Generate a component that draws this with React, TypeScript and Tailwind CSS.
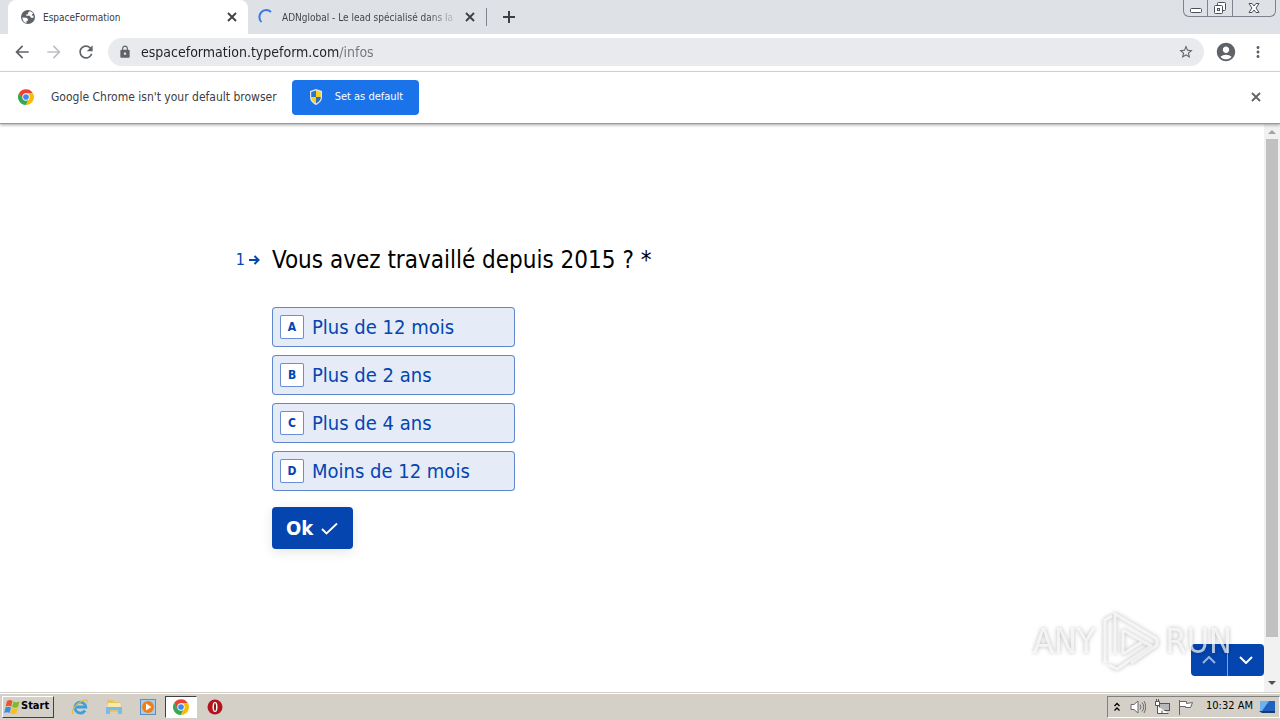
import { useState } from "react";
import { MdAccountCircle, MdArrowBack, MdArrowForward, MdLock, MdMoreVert, MdRefresh, MdStarBorder } from "react-icons/md";

const choices = [
  { key: "A", label: "Plus de 12 mois" },
  { key: "B", label: "Plus de 2 ans" },
  { key: "C", label: "Plus de 4 ans" },
  { key: "D", label: "Moins de 12 mois" },
];

const ChromeLogo = () => (
  <svg viewBox="0 0 48 48" className="size-4">
    <path fill="#ea4335" d="M24 13h20.8A24 24 0 0 0 3.2 12l10 18z" />
    <path fill="#34a853" d="M3.2 12l11.3 17.5L33.5 29.500L24 48A24 24 0 0 1 3.200 12z" />
    <path fill="#fbbc05" d="M24 13h21.300A24 24 0 0 1 24 48l9.500-18.500z" />
    <circle cx="24" cy="24" r="11" fill="#fff" />
    <circle cx="24" cy="24" r="8.500" fill="#4285f4" />
  </svg>
);

const ShieldIcon = () => (
  <svg viewBox="0 0 16 16" className="size-4">
    <path fill="#dfe6ee" d="M8 0l6 2v6c0 4-3 6.500-6 8-3-1.500-6-4-6-8V2z" />
    <path fill="#2f76c9" d="M8 1.500V8H3.200V3z" />
    <path fill="#f7d21e" d="M8 1.500V8h4.800V3zM3.200 8H8v6.500C5 13 3.300 11 3.200 8z" />
    <path fill="#2f6cb5" d="M8 8h4.800c-.1 3-1.800 5-4.800 6.500z" />
  </svg>
);

const GlobeIcon = () => (
  <svg viewBox="0 0 16 16" className="size-4 shrink-0">
    <circle cx="8" cy="8" r="7" fill="#5f6368" />
    <path
      fill="#fff"
      d="M2.500 8.500l4 .2 1.500 1.500v1.500H6.500V14C4 13.500 2.200 11 2.500 8.500zM9.500 2.300L8 3.700v1.500H6.300v1.600h3.500l1.200 2h2.500v-2l-1.800-.3.400-1.300 1.200-.8C12.300 3.300 11 2.500 9.500 2.300z"
    />
  </svg>
);

const CloseIcon = ({ color }: { color: string }) => (
  <svg viewBox="0 0 16 16" className="size-4" stroke={color} strokeWidth="1.800">
    <path d="M4 4l8 8M12 4l-8 8" />
  </svg>
);

const TabStrip = () => (
  <header className="flex h-[34px] bg-[#dee1e6] text-[10px] text-[#3c4043]">
    <div className="ml-2 flex w-60 items-center rounded-t-lg bg-white pr-2 pl-3">
      <GlobeIcon />
      <span className="ml-[7px] flex-1">EspaceFormation</span>
      <button aria-label="Close tab">
        <CloseIcon color="#3c4043" />
      </button>
    </div>
    <div className="my-2 flex w-[239px] items-center border-r border-[#80868b] pr-2 pl-2.5">
      <svg viewBox="0 0 16 16" className="size-4 shrink-0" fill="none" stroke="#3b78e7" strokeWidth="2">
        <path d="M3.500 13A6.500 6.500 0 0 1 13 3" />
      </svg>
      <span className="mr-auto ml-2 bg-linear-to-r from-[#3c4043] from-85% to-[#3c4043]/20 bg-clip-text whitespace-nowrap text-transparent">
        ADNglobal - Le lead spécialisé dans la
      </span>
      <button aria-label="Close tab">
        <CloseIcon color="#3c4043" />
      </button>
    </div>
    <button aria-label="New tab" className="ml-4">
      <svg viewBox="0 0 12 12" className="size-3" stroke="#3c4043" strokeWidth="2">
        <path d="M6 0v12M0 6h12" />
      </svg>
    </button>
    <div className="mr-1 ml-auto flex h-[17px] divide-x divide-[#7d828c] rounded-b-md border border-t-0 border-[#7d828c]">
      <button aria-label="Minimize" className="flex w-6 justify-center">
        <svg viewBox="0 0 14 16" className="h-4 w-3.5" fill="#fff" stroke="#4b5059">
          <rect x="1.500" y="8.500" width="11" height="4" rx="1" />
        </svg>
      </button>
      <button aria-label="Restore" className="flex w-[25px] justify-center">
        <svg viewBox="0 0 14 16" className="h-4 w-3.5" fill="#fff" stroke="#4b5059">
          <rect x="4.500" y="2.500" width="8" height="8" rx="1" />
          <rect x="1.500" y="5.500" width="8" height="8" rx="1" />
          <rect x="4.500" y="8.500" width="2" height="2" />
        </svg>
      </button>
      <button aria-label="Close" className="flex w-[42px] justify-center">
        <svg viewBox="0 0 14 16" className="h-4 w-3.5" fill="#fff" stroke="#4b5059">
          <path d="M2 3.500h3l2 2.500 2-2.500h3l-3 4.500 3 4.500H9L7 10l-2 2.500H2l3-4.500z" />
        </svg>
      </button>
    </div>
  </header>
);

const Toolbar = () => (
  <nav className="flex h-[38px] items-center border-b border-[#dadce0] px-3 pb-0.5 text-[#5f6368]">
    <button aria-label="Back">
      <MdArrowBack className="size-5" />
    </button>
    <button aria-label="Forward" className="ml-3 text-[#bdc1c6]">
      <MdArrowForward className="size-5" />
    </button>
    <button aria-label="Reload" className="ml-3">
      <MdRefresh className="size-5" />
    </button>
    <div className="ml-3 flex h-7 flex-1 items-center rounded-full bg-[#e8eaed] px-2.5">
      <MdLock className="size-3.5" />
      <input
        aria-label="Address"
        defaultValue="espaceformation.typeform.com/infos"
        className="ml-[9px] min-w-0 flex-1 bg-linear-to-r from-[#202124] from-[198px] to-[#70757a] to-[198px] bg-clip-text text-sm text-transparent outline-none"
      />
      <button aria-label="Bookmark">
        <MdStarBorder className="size-4" />
      </button>
    </div>
    <button aria-label="Profile" className="ml-[11px]">
      <MdAccountCircle className="size-[22px]" />
    </button>
    <button aria-label="Menu" className="mr-px ml-3">
      <MdMoreVert className="size-[18px]" />
    </button>
  </nav>
);

const DefaultBrowserBar = () => (
  <div className="relative flex h-[52px] items-center border-b border-[#9a9a9a] pr-4 pb-px pl-[18px] text-[#3c4043] shadow-[0_1px_3px_rgba(0,0,0,0.35)]">
    <ChromeLogo />
    <p className="ml-[17px] text-xs">Google Chrome isn't your default browser</p>
    <button className="ml-[15px] flex h-[35px] items-center gap-[11px] rounded-sm bg-[#1a73e8] px-4 text-[11px] text-white">
      <ShieldIcon />
      Set as default
    </button>
    <button aria-label="Dismiss" className="ml-auto">
      <CloseIcon color="#5f6368" />
    </button>
  </div>
);

const Question = () => {
  const [selected, setSelected] = useState("");

  return (
    <section className="mx-auto w-full max-w-[720px] pt-[118px]">
      <div className="relative">
        <div className="absolute top-2 right-full mr-3 flex items-center gap-1 text-base leading-5 text-[#0445af]">
          1
          <svg viewBox="0 0 11 10" className="h-2.5 w-[11px]" fill="none" stroke="currentColor" strokeWidth="2">
            <path d="M0 5h9M5.500 1l4 4-4 4" />
          </svg>
        </div>
        <h1 className="text-2xl leading-9 text-black">Vous avez travaillé depuis 2015 ? *</h1>
      </div>
      <ul className="mt-[29px] flex w-[243px] flex-col gap-2">
        {choices.map((choice) => (
          <li key={choice.key}>
            <button
              aria-pressed={selected === choice.key}
              onClick={() => setSelected(choice.key)}
              className="flex h-10 w-full items-center gap-2 rounded-sm border border-[#0445af]/60 bg-[#0445af]/10 px-[7px] text-xl text-[#0445af]"
            >
              <span className="flex size-6 items-center justify-center rounded-xs border border-[#0445af]/60 bg-white text-xs font-bold">
                {choice.key}
              </span>
              {choice.label}
            </button>
          </li>
        ))}
      </ul>
      <button className="mt-4 flex h-[42px] items-center gap-2 rounded-sm bg-[#0445af] px-3.5 text-xl font-bold text-white shadow-[0_3px_12px_rgba(0,0,0,0.1)]">
        Ok
        <svg viewBox="0 0 18 13" className="h-[13px] w-[18px]" fill="none" stroke="currentColor" strokeWidth="1.800">
          <path d="M1 7l4.500 4.500L16 1.500" />
        </svg>
      </button>
    </section>
  );
};

const Scrollbar = () => (
  <div className="flex w-4 flex-col items-center bg-[#f1f1f1]">
    <svg viewBox="0 0 16 15" className="h-[15px] w-4" fill="#a3a3a3">
      <path d="M4 10l4-4 4 4z" />
    </svg>
    <div className="w-3 flex-1 bg-[#c1c1c1]" />
    <svg viewBox="0 0 16 15" className="mt-10 h-[15px] w-4" fill="#505050">
      <path d="M4 4l4 4 4-4z" />
    </svg>
  </div>
);

const Watermark = () => (
  <div className="pointer-events-none absolute right-8 bottom-5 flex items-center gap-1.5 text-[34px] text-white/70 drop-shadow-[0_0_2px_rgba(0,0,0,0.4)]">
    <span>ANY</span>
    <svg viewBox="0 0 58 62" className="h-[62px] w-[58px]" fill="none" stroke="currentColor" strokeWidth="3" strokeLinejoin="round">
      <path d="M4 53V10l7-4M14 44V4l42 25M22 20l28 16L16 59l-8-4M22 44V20M22 44l19-12M56 29v6L30 53" />
    </svg>
    <span>RUN</span>
  </div>
);

const PageNav = () => (
  <div className="absolute right-0 bottom-4 flex divide-x divide-white/50 rounded-sm bg-[#0445af] text-white">
    <button aria-label="Previous question" className="flex h-8 w-[37px] items-center justify-center">
      <svg viewBox="0 0 14 8" className="h-2 w-3.5 opacity-60" fill="none" stroke="currentColor" strokeWidth="2">
        <path d="M1 7l6-6 6 6" />
      </svg>
    </button>
    <button aria-label="Next question" className="flex h-8 w-9 items-center justify-center">
      <svg viewBox="0 0 14 8" className="h-2 w-3.5" fill="none" stroke="currentColor" strokeWidth="2">
        <path d="M1 1l6 6 6-6" />
      </svg>
    </button>
  </div>
);

const Taskbar = () => (
  <footer className="flex h-7 items-center border-t border-[#d4d0c8] bg-[#d4d0c8] pl-0.5 text-[11px] text-black shadow-[inset_0_1px_0_#fff]">
    <button className="flex h-[22px] w-[52px] items-center gap-px border border-t-white border-r-[#404040] border-b-[#404040] border-l-white pl-px font-bold">
      <svg viewBox="0 0 16 16" className="size-4">
        <path fill="#e8562a" d="M3 2q3-1.800 5.500 0L7.200 7.500q-2.500-1.600-5.500 0z" />
        <path fill="#7fba2c" d="M9.500 2.500q3 1.500 6 0L14 8q-3 1.300-6 0z" />
        <path fill="#3b8ede" d="M1.500 8.500q3-1.600 5.500 0l-1.300 5.500q-2.500-1.600-5.500 0z" />
        <path fill="#f8c018" d="M7.800 9q3 1.500 6 0l-1.500 5.500q-3 1.300-6 0z" />
      </svg>
      Start
    </button>
    <button aria-label="Internet Explorer" className="ml-[17px]">
      <svg viewBox="0 0 18 18" className="size-[18px]" fill="none">
        <path d="M14 12.500a5.500 5.500 0 1 1 .8-3.500H5" stroke="#3aa0e0" strokeWidth="2.800" />
        <path d="M2 16C-1 13 6 5 12 2.500c4-1.500 4.500 0 4 2" stroke="#e8b93a" strokeWidth="1.300" />
      </svg>
    </button>
    <button aria-label="Explorer" className="ml-4">
      <svg viewBox="0 0 18 18" className="size-[18px]">
        <path fill="#e5c464" d="M2 2h6l1 2h6v10H2z" />
        <path fill="#f9e9a9" d="M3 5h12l1 4H2z" />
        <path fill="#7dbbe4" d="M1 9h16v7h-4v-4H5v4H1z" />
      </svg>
    </button>
    <button aria-label="Media Player" className="ml-4">
      <svg viewBox="0 0 18 18" className="size-[18px]">
        <rect x="1.500" y="1.500" width="15" height="15" fill="#a9cdee" stroke="#5c8fc0" />
        <circle cx="9" cy="9" r="6" fill="#f07f13" />
        <path fill="#fff" d="M7 5.500v7L12.500 9z" />
      </svg>
    </button>
    <button aria-label="Chrome" className="ml-2 flex h-[22px] w-8 items-center justify-center border border-t-[#404040] border-r-white border-b-white border-l-[#404040] bg-white">
      <ChromeLogo />
    </button>
    <button aria-label="Opera" className="ml-2.5">
      <svg viewBox="0 0 16 16" className="size-4">
        <circle cx="8" cy="8" r="7.500" fill="#b3141b" />
        <ellipse cx="8" cy="8" rx="2.500" ry="5" fill="#fff" />
        <ellipse cx="8" cy="8" rx="1" ry="4" fill="#8c0d12" />
      </svg>
    </button>
    <div className="ml-auto flex h-[22px] items-center border border-t-[#808080] border-r-white border-b-white border-l-[#808080] pr-1 pl-1.5">
      <svg viewBox="0 0 6 10" className="h-2.5 w-1.5" fill="none" stroke="#000" strokeWidth="1.300">
        <path d="M.5 4L3 1.500 5.500 4M.5 8.500L3 6l2.500 2.500" />
      </svg>
      <svg viewBox="0 0 16 16" className="ml-2.5 size-4" fill="#fff" stroke="#6b6b6b">
        <path d="M1 5.500h3L8 2v12l-4-3.500H1z" />
        <path fill="none" d="M10 5.500q2 2.500 0 5M12 3.500q3.500 4.500 0 9M14 2q3.500 6 0 12" />
      </svg>
      <svg viewBox="0 0 16 16" className="ml-2 size-4" fill="#fff" stroke="#555">
        <rect x="5.500" y="4.500" width="10" height="7" fill="#b8b8b8" />
        <path d="M1.500 2.500h4v4h-4zM3.500 7v7.500h11M8 14.500v-3M2.500 0v2M4.500 0v2" />
      </svg>
      <svg viewBox="0 0 16 16" className="ml-2 size-4" fill="#fff" stroke="#666">
        <path d="M1.500 1v15M1.500 2.500h7v2l6-1-2 5h-5v-1h-6z" />
      </svg>
      <time className="ml-3">10:32 AM</time>
      <svg viewBox="0 0 16 14" className="ml-1.5 h-3.5 w-4">
        <rect x="1" y="1" width="15" height="10" fill="#1e62c0" />
        <path fill="#6fb0ee" d="M1 1h9L3 11H1z" />
        <path fill="#173a6b" d="M0 11h16v2H3z" />
      </svg>
    </div>
  </footer>
);

const App = () => (
  <div className="flex min-h-screen flex-col bg-white font-['DejaVu_Sans_Condensed','DejaVu_Sans',sans-serif]">
    <TabStrip />
    <Toolbar />
    <DefaultBrowserBar />
    <div className="flex flex-1">
      <main className="relative flex flex-1">
        <Question />
        <PageNav />
        <Watermark />
      </main>
      <Scrollbar />
    </div>
    <Taskbar />
  </div>
);

export default App;
